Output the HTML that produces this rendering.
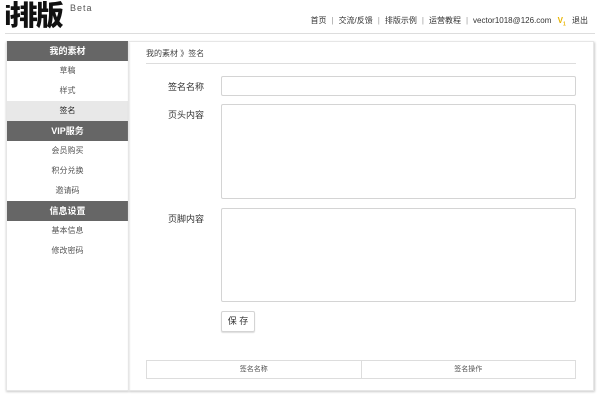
<!DOCTYPE html><html><head><meta charset="utf-8"><style>
*{margin:0;padding:0;box-sizing:border-box}
body{width:600px;height:400px;background:#fff;font-family:"Liberation Sans","Noto Sans CJK SC",sans-serif;position:relative;overflow:hidden;color:#333}
.a{position:absolute}
.logo{left:4px;top:0px;font-size:28px;font-weight:900;color:#111;letter-spacing:-2px;line-height:32px}
.beta{left:70px;top:3px;font-size:9px;color:#555;letter-spacing:1px}
.nav{right:12px;top:15px;font-size:8px;color:#333;white-space:nowrap}
.nav span{color:#999;margin:0 5px}
.hl{left:5px;top:33px;width:590px;height:1px;background:#ddd}
.side{left:6px;top:41px;width:123px;height:350px;border:1px solid #e6e6e6;border-top:none;box-shadow:0 1px 2px #ccc}
.h{height:20px;background:#666;color:#fff;font-size:9px;font-weight:bold;text-align:center;line-height:20px}
.i{height:20px;font-size:8px;color:#555;text-align:center;line-height:20px}
.main{left:128px;top:41px;width:466px;height:350px;border:1px solid #e6e6e6;box-shadow:1px 1px 2px #ccc}
.lab{font-size:9px;color:#333;left:168px}
.box{border:1px solid #d4d4d4;border-radius:2px;left:221px;width:355px;background:#fff}
</style></head><body>
<div class="a logo">i排版</div><div class="a beta">Beta</div>
<div class="a nav">首页<span>|</span>交流/反馈<span>|</span>排版示例<span>|</span>运营教程<span>|</span>vector1018@126.com <b style="color:#e8b400;margin:0 4px">V<sub style="font-size:5px">1</sub></b> 退出</div>
<div class="a hl"></div>
<div class="a side">
<div class="h">我的素材</div><div class="i">草稿</div><div class="i">样式</div><div class="i" style="background:#e8e8e8;color:#222">签名</div>
<div class="h">VIP服务</div><div class="i">会员购买</div><div class="i">积分兑换</div><div class="i">邀请码</div>
<div class="h">信息设置</div><div class="i">基本信息</div><div class="i">修改密码</div></div>
<div class="a main"></div>
<div class="a" style="left:146px;top:48px;font-size:8px;color:#444">我的素材 》签名</div>
<div class="a" style="left:146px;top:63px;width:430px;height:1px;background:#ddd"></div>
<div class="a lab" style="top:80px">签名名称</div>
<div class="a box" style="top:76px;height:20px"></div>
<div class="a lab" style="top:108px">页头内容</div>
<div class="a box" style="top:104px;height:95px"></div>
<div class="a lab" style="top:212px">页脚内容</div>
<div class="a box" style="top:208px;height:94px"></div>
<div class="a" style="left:221px;top:311px;width:34px;height:21px;border:1px solid #d4d4d4;border-radius:2px;font-size:9px;text-align:center;line-height:19px;box-shadow:0 1px 1px #ddd">保 存</div>
<div class="a" style="left:146px;top:360px;width:430px;height:19px;border:1px solid #ddd;display:flex;font-size:7px;color:#555;line-height:17px">
<div style="flex:1;text-align:center;border-right:1px solid #ddd">签名名称</div><div style="flex:1;text-align:center">签名操作</div></div>
</body></html>
